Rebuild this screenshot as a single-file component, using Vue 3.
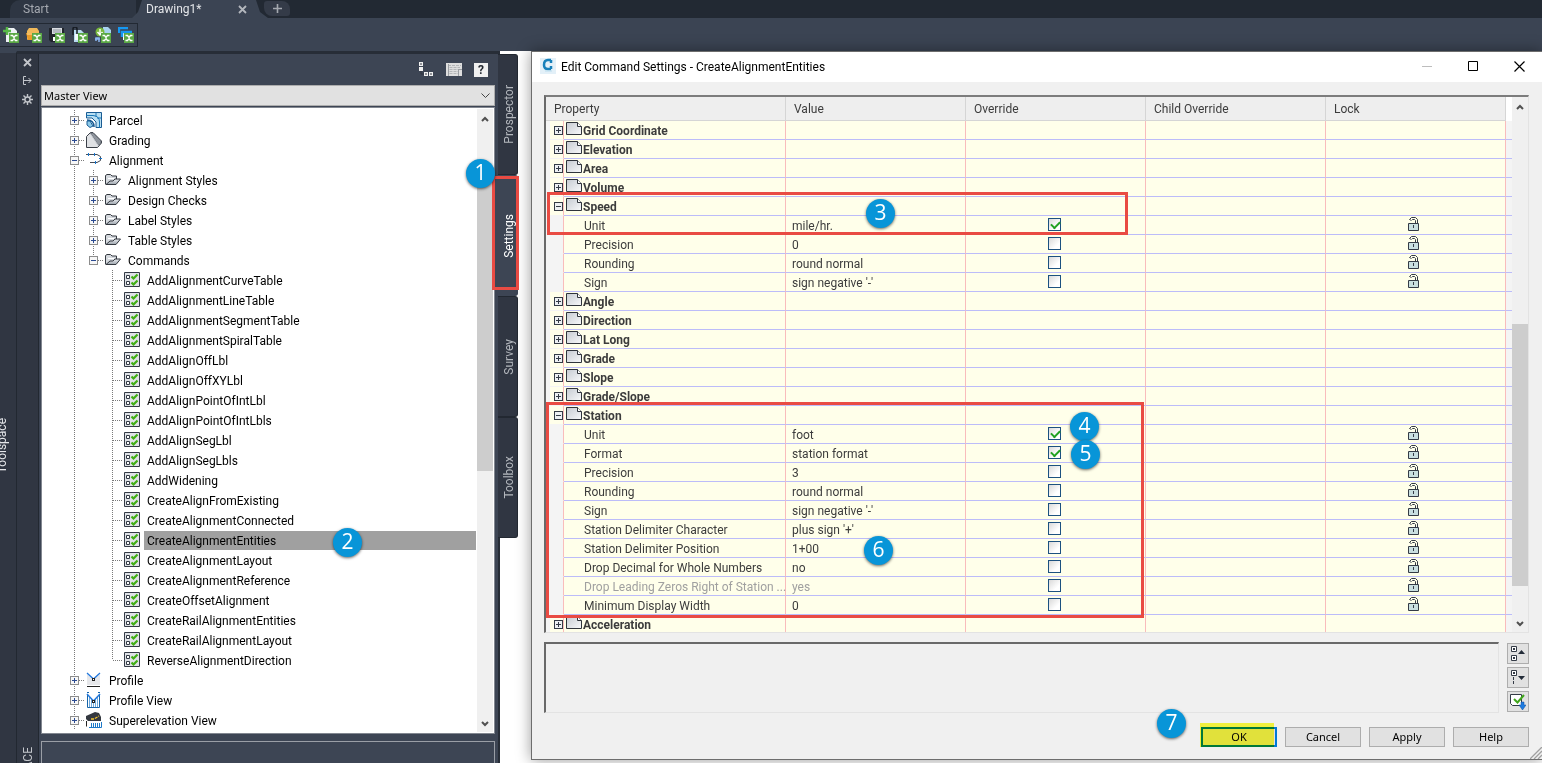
<template>
  <div class="app">
    <!-- Shared icon shapes -->
    <svg class="sprite" aria-hidden="true">
      <defs>
        <linearGradient id="paper" x1="0" y1="0" x2="1" y2="1">
          <stop offset="0" stop-color="#c6cbd2" />
          <stop offset="1" stop-color="#f8f9fa" />
        </linearGradient>
        <linearGradient id="steel" x1="0" y1="0" x2="0" y2="1">
          <stop offset="0" stop-color="#eceef1" />
          <stop offset="1" stop-color="#9aa2ab" />
        </linearGradient>
      </defs>
      <symbol id="badge-x" viewBox="0 0 10 10">
        <rect width="10" height="10" fill="#5aa845" />
        <path d="M1.500 2.500H3.500L5 4.500L6.500 2.500H8.500M1.500 7.500H3.500L5 5.500L6.500 7.500H8.500" fill="none" stroke="#fff" stroke-width="1.300" />
      </symbol>
      <symbol id="tool-new" viewBox="0 0 16 16">
        <path d="M3 1H11L14 4V15H3Z" fill="#eef2f5" />
        <path d="M0 4H8M4 0V8" stroke="#57b947" stroke-width="2.500" />
        <use href="#badge-x" x="6" y="6" width="10" height="10" />
      </symbol>
      <symbol id="tool-open" viewBox="0 0 16 16">
        <path d="M1 13V4L3 1H11L13 4V6" fill="#f0b95a" />
        <path d="M0 6H13L15 8L13 13H2Z" fill="#e99a27" />
        <path d="M1 7H13" stroke="#ffe0a0" />
        <use href="#badge-x" x="6" y="6" width="10" height="10" />
      </symbol>
      <symbol id="tool-save" viewBox="0 0 16 16">
        <path d="M0 1H15V15H2L0 13Z" fill="#20242b" />
        <path d="M3 1H13V7H3Z" fill="#d9dde2" />
        <path d="M4 3H12M4 5H12" stroke="#9299a2" />
        <path d="M4 10H6V14H4Z" fill="#fff" />
        <use href="#badge-x" x="6" y="6" width="10" height="10" />
      </symbol>
      <symbol id="tool-attach" viewBox="0 0 16 16">
        <path d="M2 3H9L13 7V15H2Z" fill="#b9dcf0" />
        <path d="M1 8V2Q1 0 3 0Q5 0 5 2V9" fill="none" stroke="#161b22" stroke-width="1.500" />
        <path d="M3 7H6V13H3Z" fill="#f3fafe" />
        <use href="#badge-x" x="6" y="6" width="10" height="10" />
      </symbol>
      <symbol id="tool-import" viewBox="0 0 16 16">
        <path d="M8 0H13L16 3V8H8Z" fill="#a9d2f0" />
        <circle cx="5" cy="5" r="4.500" fill="#79b93c" />
        <path d="M5 2V8M2.500 5L5 8L7.500 5" fill="none" stroke="#fff" stroke-width="1.400" />
        <path d="M0 12H5M1 14V11H4V15" fill="none" stroke="#8ab4ee" stroke-width="1.500" />
        <use href="#badge-x" x="6" y="6" width="10" height="10" />
      </symbol>
      <symbol id="tool-windows" viewBox="0 0 16 16">
        <path d="M1 6V1H10" fill="none" stroke="#1598f2" stroke-width="2.400" />
        <path d="M5 6H14V13H5Z" fill="#fff" />
        <path d="M4 10V5H14" fill="none" stroke="#1598f2" stroke-width="2.400" />
        <use href="#badge-x" x="6" y="6" width="10" height="10" />
      </symbol>

      <symbol id="parcel" viewBox="0 0 16 16">
        <path d="M.500 .500H15.500V15.500H10V10L6 6H.500Z" fill="#b9dff2" stroke="#1a5c93" />
        <path d="M.500 3.500H7Q13.500 4 13.500 10V15.500" fill="none" stroke="#1a78b8" />
        <path d="M1 8Q8 8 8 15" fill="none" stroke="#1a5c93" stroke-width="1.500" />
        <path d="M1 9H4L7 14L4 15.500L1 13Z" fill="#8ecbea" stroke="#1a5c93" />
        <path d="M10 1V5M15 6H11" stroke="#1a78b8" />
      </symbol>
      <symbol id="grading" viewBox="0 0 16 16">
        <path d="M.500 4.500L4.500 .500H7L15.500 9V11L11.500 15.500H.500Z" fill="#dfe1e4" stroke="#3a3f47" />
        <path d="M4.500 1L7 1L15 9V11L12.500 13.500Z" fill="#8f959d" stroke="#565c65" stroke-width=".700" />
        <path d="M4.500 2L12.500 14" stroke="#c6cad0" />
      </symbol>
      <symbol id="alignment" viewBox="0 0 16 16">
        <path d="M0 2.500H11M4 10.500H11M11 2.500L14.500 4.500V8.500L11 10.500" fill="none" stroke="#454c56" />
        <path d="M2.500 1V4M8.500 1V4M13 6.500H16M9.500 9V12" stroke="#1677d2" />
      </symbol>
      <symbol id="folder" viewBox="0 0 16 16">
        <path d="M.500 12.500V3.500L2 2.500H5.500L7 4H11.500V7" fill="#d5d9de" stroke="#343940" />
        <path d="M1 12.500L5 9H8L10 7H15.500L11 12.500Z" fill="url(#steel)" stroke="#343940" />
        <path d="M3 6.500H9" stroke="#fff" />
      </symbol>
      <symbol id="command" viewBox="0 0 16 16">
        <path d="M.500 .500H15.500V14.500H.500Z" fill="#dfe2e6" stroke="#343b46" />
        <path d="M2.500 3.500H5.500V6.500H2.500ZM2.500 9.500H5.500V12.500H2.500Z" fill="#fff" stroke="#343b46" />
        <path d="M7.500 4.500L9.500 6.500L13.500 2.500M7.500 10.500L9.500 12.500L13.500 8.500" fill="none" stroke="#3fae14" stroke-width="2.200" />
      </symbol>
      <symbol id="profile" viewBox="0 0 16 16">
        <path d="M1 2L7.500 8L14 2V13H1Z" fill="#e6e7ea" />
        <path d="M1 1L7.500 7L14 1" fill="none" stroke="#2378dc" stroke-width="1.300" />
        <rect x="6.500" y="6.500" width="2" height="2" fill="#fff" stroke="#222" />
        <path d="M1 14.500H14" stroke="#222" />
      </symbol>
      <symbol id="profile-view" viewBox="0 0 16 16">
        <path d="M1.500 3V15.500H13.500V3M1 .500H3M12 .500H14" fill="none" stroke="#1765a9" />
        <path d="M3.500 4V15M5.500 6V15M7.500 10V15M9.500 6V15M11.500 4V15" stroke="#6ea9dc" />
        <path d="M1 2L7.500 9L14 2" fill="none" stroke="#2378dc" stroke-width="1.500" />
        <rect x="6.500" y="8.500" width="2" height="2" fill="#fff" stroke="#222" />
      </symbol>
      <symbol id="superelevation" viewBox="0 0 16 16">
        <path d="M0 7V4L9 0L13 1L15 5V9L2 9Z" fill="#343840" />
        <path d="M5 7H8L13 4" fill="none" stroke="#f4c530" stroke-width="1.300" stroke-dasharray="3 1" />
        <path d="M.500 9V14.500" stroke="#222" />
        <path d="M3 15.500H15.500V10M5.500 11V15M7.500 11V15M9.500 11V15M11.500 11V15M13.500 11V15" fill="none" stroke="#1d79c9" />
      </symbol>

      <symbol id="page" viewBox="0 0 16 14">
        <path d="M.500 .500H11.500L15.500 4.500V12.500H.500Z" fill="url(#paper)" stroke="#2f343b" />
        <path d="M11.500 .500V4.500H15.500" fill="#fff" stroke="#2f343b" />
      </symbol>
      <symbol id="unlocked" viewBox="0 0 11 14">
        <path d="M3 3H2L1.500 2.500L3.500 .500H7.500L9.500 2.500V6" fill="none" stroke="#343b46" />
        <path d="M3.500 3.500L4.500 2.500H6.500L7.500 3.500V6" fill="none" stroke="#343b46" />
        <path d="M.500 6.500H10.500V13.500H.500Z" fill="#c9dfe0" stroke="#343b46" />
        <path d="M5.500 8V11" stroke="#343b46" />
      </symbol>
      <symbol id="chevron-up" viewBox="0 0 8 6">
        <path d="M1 5L4 2L7 5" fill="none" stroke="#505050" stroke-width="2" />
      </symbol>
      <symbol id="chevron-down" viewBox="0 0 8 6">
        <path d="M1 1L4 4L7 1" fill="none" stroke="#505050" stroke-width="2" />
      </symbol>
    </svg>

    <header class="top">
      <nav class="tabs">
        <button class="tab">Start</button>
        <button class="tab tab-active">
          Drawing1*
          <svg width="9" height="9" viewBox="0 0 9 9"><path d="M1 1L8 8M8 1L1 8" stroke="#b3b7bd" stroke-width="1.800" /></svg>
        </button>
        <button class="tab-add" aria-label="New tab">
          <svg width="9" height="9" viewBox="0 0 9 9"><path d="M0 4.500H9M4.500 0V9" stroke="#a4a8af" stroke-width="1.600" /></svg>
        </button>
      </nav>
      <div class="toolbar">
        <button v-for="tool in tools" :key="tool.icon" :aria-label="tool.label">
          <svg width="16" height="16"><use :href="'#' + tool.icon" /></svg>
        </button>
      </div>
    </header>

    <main class="workspace">
      <div class="dock"><span>Toolspace</span></div>

      <section class="palette">
        <div class="palette-rail">
          <svg width="9" height="9" viewBox="0 0 9 9"><path d="M1 1L8 8M8 1L1 8" stroke="#c3c6cb" stroke-width="1.800" /></svg>
          <svg width="9" height="9" viewBox="0 0 9 9"><path d="M3 .500H.500V8.500H3M1 4.500H8M5.500 2L8 4.500L5.500 7" fill="none" stroke="#c3c6cb" /></svg>
          <svg width="11" height="11" viewBox="0 0 11 11">
            <circle cx="5.500" cy="5.500" r="2.500" fill="none" stroke="#c3c6cb" stroke-width="1.400" />
            <path d="M5.500 0V3M5.500 8V11M0 5.500H3M8 5.500H11M1.500 1.500L3.500 3.500M7.500 7.500L9.500 9.500M9.500 1.500L7.500 3.500M3.500 7.500L1.500 9.500" stroke="#c3c6cb" stroke-width="1.400" />
          </svg>
          <span class="palette-name">TOOLSPACE</span>
        </div>

        <div class="palette-body">
          <div class="palette-tools">
            <button aria-label="Toggle item tree">
              <svg width="15" height="15" viewBox="0 0 15 15">
                <path d="M0 0H4V4H0ZM0 5H4V9H0ZM5 10H9V14H5ZM10 10H14V14H10Z" fill="#f0f0f0" />
                <path d="M1 2H3M2 9V12H5M6 12H8M11 12H13" fill="none" stroke="#30353e" />
              </svg>
            </button>
            <button aria-label="Panorama">
              <svg width="16" height="14" viewBox="0 0 16 14">
                <path d="M0 0H16V13H0Z" fill="#dedede" />
                <path d="M2 2.500H15M3.500 4.500H14M3.500 6.500H12M3.500 8.500H12M3.500 10.500H12" stroke="#b4b6b8" stroke-dasharray="3 1" />
                <path d="M2.500 1V13M12.500 6V13M12.500 6.500H16" fill="none" stroke="#9b9ea2" />
              </svg>
            </button>
            <button class="help" aria-label="Help">?</button>
          </div>

          <div class="view-select">
            <select aria-label="View">
              <option>Master View</option>
            </select>
            <svg width="9" height="6" viewBox="0 0 9 6"><path d="M.500 .500L4.500 4.500L8.500 .500" fill="none" stroke="#444" /></svg>
          </div>

          <div class="tree-box">
            <ul class="tree">
              <li
                v-for="node in treeNodes"
                :key="node.label"
                :class="{ selected: node.label === selectedNode }"
              >
                <svg
                  v-for="(guide, i) in node.guides"
                  :key="i"
                  width="19"
                  height="20"
                  shape-rendering="crispEdges"
                >
                  <path v-if="guide !== 'none'" :d="guidePaths[guide]" stroke="#7a7a7a" stroke-dasharray="1 1" fill="none" />
                  <g v-if="node.toggle && i === node.guides.length - 1">
                    <rect x="5.500" y="6.500" width="8" height="8" fill="#f7f7f7" stroke="#8c8c8c" />
                    <path :d="node.toggle === 'plus' ? 'M7 10.500H12M9.500 8V13' : 'M7 10.500H12'" stroke="#2b4a91" />
                  </g>
                </svg>
                <svg class="node-icon" width="16" height="16"><use :href="'#' + node.icon" /></svg>
                <span>{{ node.label }}</span>
              </li>
            </ul>
            <div class="scrollbar tree-scroll">
              <svg width="8" height="6"><use href="#chevron-up" /></svg>
              <div class="thumb"></div>
              <svg width="8" height="6"><use href="#chevron-down" /></svg>
            </div>
          </div>
          <div class="preview"></div>
        </div>
        <b class="step step-2">2</b>
      </section>

      <nav class="side-tabs">
        <button
          v-for="tab in sideTabs"
          :key="tab"
          :class="{ current: tab === 'Settings' }"
        ><span>{{ tab }}</span></button>
        <div class="mark mark-settings"></div>
        <b class="step step-1">1</b>
      </nav>

      <section class="dialog">
        <div class="dialog-title">
          <svg width="16" height="16" viewBox="0 0 16 16">
            <rect width="16" height="16" fill="#e3f0f8" />
            <path d="M11 2H8Q4 2 4 7Q4 11 8 11H11M11 2V5M11 8V11" fill="none" stroke="#1780ba" stroke-width="2.500" />
            <path d="M5 13H12" stroke="#b9dced" />
          </svg>
          <h1>Edit Command Settings - CreateAlignmentEntities</h1>
          <button aria-label="Minimize"><svg width="11" height="11" viewBox="0 0 11 11"><path d="M0 5.500H10" stroke="#bdbdbd" /></svg></button>
          <button aria-label="Maximize"><svg width="11" height="11" viewBox="0 0 11 11"><path d="M.500 .500H9.500V9.500H.500Z" fill="none" stroke="#000" /></svg></button>
          <button aria-label="Close"><svg width="11" height="11" viewBox="0 0 11 11"><path d="M.500 .500L10.500 10.500M10.500 .500L.500 10.500" stroke="#000" stroke-width="1.200" /></svg></button>
        </div>

        <div class="grid-box">
          <table>
            <colgroup>
              <col class="col-toggle" />
              <col class="col-property" />
              <col /><col /><col /><col />
              <col class="col-end" />
            </colgroup>
            <thead>
              <tr>
                <th colspan="2">Property</th>
                <th>Value</th>
                <th>Override</th>
                <th>Child Override</th>
                <th>Lock</th>
                <th class="end"></th>
              </tr>
            </thead>
            <tbody>
              <tr v-for="(row, i) in rows" :key="i" :class="{ muted: row.muted }">
                <td class="toggle">
                  <button v-if="row.group" :aria-label="'Toggle ' + row.name">
                    <svg width="9" height="9" viewBox="0 0 9 9" shape-rendering="crispEdges">
                      <rect x=".500" y=".500" width="8" height="8" fill="#edf0f3" stroke="#343b46" />
                      <path :d="row.open ? 'M2 4.500H7' : 'M2 4.500H7M4.500 2V7'" stroke="#343b46" />
                    </svg>
                  </button>
                </td>
                <td v-if="row.group" class="group">
                  <div><svg width="16" height="14"><use href="#page" /></svg><span>{{ row.name }}</span></div>
                </td>
                <td v-else class="property">{{ row.name }}</td>
                <td>{{ row.value }}</td>
                <td class="override">
                  <input v-if="!row.group" v-model="row.override" type="checkbox" :aria-label="row.name + ' override'" />
                </td>
                <td></td>
                <td class="lock">
                  <svg v-if="!row.group" width="11" height="14"><use href="#unlocked" /></svg>
                </td>
                <td class="end"></td>
              </tr>
            </tbody>
          </table>
          <div class="scrollbar grid-scroll">
            <svg width="8" height="6"><use href="#chevron-up" /></svg>
            <div class="thumb"></div>
            <svg width="8" height="6"><use href="#chevron-down" /></svg>
          </div>
        </div>

        <div class="details">
          <div class="description"></div>
          <div class="detail-buttons">
            <button aria-label="Collapse all">
              <svg width="16" height="16" viewBox="0 0 16 16">
                <path d="M1.500 .500H6.500V5.500H1.500ZM1.500 9.500H6.500V14.500H1.500Z" fill="#fff" stroke="#343b46" />
                <path d="M3 2H5V4H3ZM3 11H5V13H3Z" fill="#343b46" />
                <path d="M8 8L11.500 4L15 8Z" fill="#222b38" />
              </svg>
            </button>
            <button aria-label="Expand all">
              <svg width="16" height="16" viewBox="0 0 16 16">
                <path d="M1.500 .500H6.500V5.500H1.500Z" fill="#fff" stroke="#343b46" />
                <path d="M3 2H5V4H3Z" fill="#343b46" />
                <path d="M3.500 7V15" stroke="#343b46" stroke-dasharray="3 1" />
                <path d="M8 6L11.500 10L15 6Z" fill="#222b38" />
              </svg>
            </button>
            <button aria-label="Override all dependencies">
              <svg width="16" height="16" viewBox="0 0 16 16">
                <path d="M.500 .500H11.500V11.500H2.500L.500 9.500Z" fill="#fff" stroke="#343b46" />
                <path d="M4 5L7.500 8.500L14 1" fill="none" stroke="#3fa51b" stroke-width="2" />
                <path d="M11 8H14V11H16L12.500 16L9 11H11Z" fill="#1e7be0" stroke="#0d4f9d" stroke-width=".500" />
              </svg>
            </button>
          </div>
        </div>

        <div class="actions">
          <button class="ok">OK</button>
          <button>Cancel</button>
          <button>Apply</button>
          <button>Help</button>
          <div class="highlight"></div>
        </div>
        <svg class="grip" width="12" height="12" viewBox="0 0 12 12"><path d="M0 12L12 0M4 12L12 4M8 12L12 8" stroke="#a0a0a0" stroke-width="1.300" /></svg>

        <div class="mark mark-speed"></div>
        <div class="mark mark-station"></div>
        <b class="step step-3">3</b>
        <b class="step step-4">4</b>
        <b class="step step-5">5</b>
        <b class="step step-6">6</b>
        <b class="step step-7">7</b>
      </section>
    </main>
  </div>
</template>

<script setup>
import { ref } from 'vue';

const tools = [
  { icon: 'tool-new', label: 'New' },
  { icon: 'tool-open', label: 'Open' },
  { icon: 'tool-save', label: 'Save' },
  { icon: 'tool-attach', label: 'Attach' },
  { icon: 'tool-import', label: 'Import' },
  { icon: 'tool-windows', label: 'Windows' }
];

const sideTabs = ['Prospector', 'Settings', 'Survey', 'Toolbox'];

// Dotted connector lines of the tree, one cell per depth level
const guidePaths = {
  line: 'M9.500 0V20',
  branch: 'M9.500 0V20M9.500 10.500H19',
  corner: 'M9.500 0V10M9.500 10.500H19'
};

const selectedNode = 'CreateAlignmentEntities';

const top = (label, icon, toggle = 'plus') => ({ label, icon, toggle, guides: ['branch'] });
const folder = (label) => ({ label, icon: 'folder', toggle: 'plus', guides: ['line', 'branch'] });

const commands = [
  'AddAlignmentCurveTable',
  'AddAlignmentLineTable',
  'AddAlignmentSegmentTable',
  'AddAlignmentSpiralTable',
  'AddAlignOffLbl',
  'AddAlignOffXYLbl',
  'AddAlignPointOfIntLbl',
  'AddAlignPointOfIntLbls',
  'AddAlignSegLbl',
  'AddAlignSegLbls',
  'AddWidening',
  'CreateAlignFromExisting',
  'CreateAlignmentConnected',
  'CreateAlignmentEntities',
  'CreateAlignmentLayout',
  'CreateAlignmentReference',
  'CreateOffsetAlignment',
  'CreateRailAlignmentEntities',
  'CreateRailAlignmentLayout',
  'ReverseAlignmentDirection'
];

const treeNodes = [
  top('Parcel', 'parcel'),
  top('Grading', 'grading'),
  top('Alignment', 'alignment', 'minus'),
  folder('Alignment Styles'),
  folder('Design Checks'),
  folder('Label Styles'),
  folder('Table Styles'),
  { label: 'Commands', icon: 'folder', toggle: 'minus', guides: ['line', 'corner'] },
  ...commands.map((label, i) => ({
    label,
    icon: 'command',
    guides: ['line', 'none', i === commands.length - 1 ? 'corner' : 'branch']
  })),
  top('Profile', 'profile'),
  top('Profile View', 'profile-view'),
  top('Superelevation View', 'superelevation')
];

const group = (name, open = false) => ({ name, open, group: true });
const setting = (name, value, override = false, muted = false) => ({ name, value, override, muted });

const rows = ref([
  group('Grid Coordinate'),
  group('Elevation'),
  group('Area'),
  group('Volume'),
  group('Speed', true),
  setting('Unit', 'mile/hr.', true),
  setting('Precision', '0'),
  setting('Rounding', 'round normal'),
  setting('Sign', "sign negative '-'"),
  group('Angle'),
  group('Direction'),
  group('Lat Long'),
  group('Grade'),
  group('Slope'),
  group('Grade/Slope'),
  group('Station', true),
  setting('Unit', 'foot', true),
  setting('Format', 'station format', true),
  setting('Precision', '3'),
  setting('Rounding', 'round normal'),
  setting('Sign', "sign negative '-'"),
  setting('Station Delimiter Character', "plus sign '+'"),
  setting('Station Delimiter Position', '1+00'),
  setting('Drop Decimal for Whole Numbers', 'no'),
  setting('Drop Leading Zeros Right of Station ...', 'yes', false, true),
  setting('Minimum Display Width', '0'),
  group('Acceleration')
]);
</script>

<style>
body {
  margin: 0;
  background: #fff;
}
</style>

<style scoped>
.app {
  font-family: Roboto, "Noto Sans", sans-serif;
  font-size: 12px;
  color: #000;
  overflow: hidden;
}

.app * {
  box-sizing: border-box;
}

.sprite {
  position: absolute;
  width: 0;
  height: 0;
}

svg {
  display: block;
  flex: none;
}

button {
  font: inherit;
  padding: 0;
  border: 0;
  background: none;
  color: inherit;
}

/* Top bar */
.top {
  height: 51px;
  background: #3b4453;
}

.tabs {
  display: flex;
  height: 18px;
  background: #222933;
}

.tab {
  width: 126px;
  margin-left: 10px;
  padding-left: 13px;
  text-align: left;
  line-height: 18px;
  color: #a5a9b0;
  background: #2e3643;
  border-radius: 10px 0 0 0;
}

.tab-active {
  display: flex;
  align-items: center;
  justify-content: space-between;
  width: 136px;
  margin-left: -4px;
  padding: 0 21px 0 14px;
  color: #e4e6e9;
  background: #3b4453;
  clip-path: polygon(10px 0, 124px 0, 128px 12px, 136px 18px, 0 18px, 6px 12px);
}

.tab-add {
  display: flex;
  align-items: center;
  justify-content: center;
  width: 26px;
  height: 15px;
  margin-top: 1px;
  margin-left: -4px;
  background: #343b48;
  border-radius: 3px 8px 3px 8px;
}

.toolbar {
  display: flex;
  gap: 7px;
  width: 138px;
  height: 24px;
  margin-top: 5px;
  padding: 3px;
  border: 1px solid #222933;
  border-left: 0;
}

/* Toolspace palette */
.workspace {
  display: flex;
  align-items: stretch;
}

.dock {
  flex: none;
  width: 17px;
  padding-top: 365px;
  background: #303642;
  border-top: 2px solid #3b4453;
  border-right: 1px solid #222831;
  color: #e4e6e9;
  overflow: hidden;
}

.dock span {
  display: block;
  width: 17px;
  margin-left: -6px;
  line-height: 17px;
  writing-mode: vertical-rl;
  transform: rotate(180deg);
}

.palette {
  position: relative;
  display: flex;
  flex: none;
  width: 481px;
  background: #3d4554;
  border-top: 3px solid #272d37;
}

/* The rail takes its height from the palette body, the name runs off its end */
.palette-rail {
  contain: size;
  display: flex;
  flex-direction: column;
  align-items: center;
  gap: 9px;
  width: 22px;
  padding-top: 4px;
  background: #303642;
  border-right: 1px solid #222831;
  overflow: hidden;
}

.palette-name {
  flex: none;
  margin-top: 633px;
  line-height: 16px;
  color: #c3c6cb;
  writing-mode: vertical-rl;
  transform: rotate(180deg);
}

.palette-body {
  display: flex;
  flex: 1;
  flex-direction: column;
  padding: 0 3px 0 2px;
}

.palette-tools {
  display: flex;
  justify-content: flex-end;
  align-items: center;
  gap: 12px;
  height: 31px;
  padding-right: 7px;
}

.help {
  width: 14px;
  height: 14px;
  background: #f0f0f0;
  color: #1f242c;
  font-weight: 700;
  line-height: 14px;
}

.view-select {
  position: relative;
  height: 21px;
}

.view-select select {
  display: block;
  width: 100%;
  height: 21px;
  padding: 0 2px;
  appearance: none;
  font-family: "Noto Sans", "Open Sans", sans-serif;
  font-size: 11px;
  color: #000;
  background: #e1e1e1;
  border: 1px solid #adadad;
  border-radius: 0;
}

.view-select svg {
  position: absolute;
  top: 8px;
  right: 5px;
  pointer-events: none;
}

.tree-box {
  display: flex;
  margin-top: 1px;
  background: #fff;
  border: 1px solid #828790;
}

.tree {
  flex: 1;
  margin: 0;
  padding: 2px 1px 3px 23px;
  list-style: none;
}

.tree li {
  display: flex;
  align-items: center;
  height: 20px;
}

.node-icon {
  margin: 0 4px 0 2px;
}

.tree span {
  flex: 1;
  padding: 2px 0 0 3px;
  line-height: 17px;
  white-space: nowrap;
}

.selected span {
  background: #a0a0a0;
}

.scrollbar {
  display: flex;
  flex-direction: column;
  align-items: center;
  justify-content: space-between;
  flex: none;
  width: 16px;
  padding: 7px 0 5px;
  background: #f0f0f0;
}

.thumb {
  width: 16px;
  background: #cdcdcd;
}

.tree-scroll {
  margin: 1px 1px 1px 0;
}

.tree-scroll .thumb {
  height: 290px;
  margin-bottom: 192px;
}

.preview {
  height: 22px;
  margin-top: 7px;
  border: 1px solid #9a9ea6;
  border-bottom: 0;
}

.side-tabs {
  position: relative;
  flex: none;
  width: 33px;
  padding-top: 3px;
  background: linear-gradient(to right, #272d37 2px, #fff 2px);
}

.side-tabs button {
  display: flex;
  align-items: center;
  justify-content: center;
  width: 20px;
  height: 121px;
  padding-left: 2px;
  background: #303642;
  color: #b3b7bd;
  border: 1px solid #222831;
  border-left: 0;
  border-radius: 0 3px 3px 0;
}

.side-tabs button span {
  line-height: 18px;
  writing-mode: vertical-rl;
  transform: rotate(180deg);
}

.side-tabs .current {
  color: #fff;
  background: #3d4554;
  border-color: #3d4554;
}

/* Settings dialog */
.dialog {
  position: relative;
  flex: 1;
  min-width: 0;
  margin-bottom: 3px;
  background: #f0f0f0;
  border: 1px solid #6d6d6d;
  border-right: 0;
  box-shadow: 0 0 14px rgba(0, 0, 0, 0.4);
}

.dialog-title {
  display: flex;
  align-items: center;
  height: 30px;
  padding: 0 17px 2px 8px;
  background: #fff;
}

.dialog-title h1 {
  flex: 1;
  margin: 0 0 0 5px;
  padding-top: 2px;
  font-size: 12px;
  font-weight: 400;
}

.dialog-title button {
  margin-left: 35px;
}

.grid-box {
  display: flex;
  height: 538px;
  margin: 13px 13px 0 12px;
  border: 2px solid #696969;
  border-top-color: #7c7c7c;
  border-right: 1px solid #e3e3e3;
  border-bottom: 1px solid #e3e3e3;
  overflow: hidden;
  color: #3c3c3c;
}

table {
  flex: 1;
  width: 0;
  height: 0;
  table-layout: fixed;
  border-collapse: separate;
  border-spacing: 0;
}

.col-toggle {
  width: 18px;
}

.col-property {
  width: 222px;
}

.col-end {
  width: 6px;
}

th {
  height: 24px;
  padding: 0 8px;
  text-align: left;
  font-weight: 400;
  background: #eee;
  border-right: 1px solid #d5d5d5;
  border-bottom: 1px solid #d5d5d5;
}

th.end {
  padding: 0;
  background: #fff;
  border: 0;
}

td {
  height: 19px;
  padding: 2px 0 0 6px;
  line-height: 16px;
  vertical-align: top;
  white-space: nowrap;
  background: #ffffea;
  border-right: 1px solid #f9bcbc;
  border-bottom: 1px solid #bcbcf9;
}

td.toggle {
  padding: 0 0 0 4px;
  background: #f4f4f4;
  border-bottom-color: #f4f4f4;
}

td.toggle button {
  display: block;
  width: 13px;
  height: 18px;
  padding: 5px 4px 4px;
  background: #ffffea;
}

td.group {
  padding: 1px 0 0 2px;
  font-weight: 700;
}

td.group div {
  display: flex;
  gap: 1px;
  height: 17px;
}

td.group span {
  line-height: 18px;
}

td.property {
  padding-left: 20px;
}

td.override {
  padding: 2px 2px 0 0;
}

td.lock {
  padding: 1px 4px 0 0;
}

td.lock svg {
  margin: 0 auto;
}

td.end {
  padding: 0;
  background: #f4f4f4;
  border-right: 0;
}

.muted td {
  color: #a0a0a0;
}

input {
  display: block;
  appearance: none;
  width: 13px;
  height: 13px;
  margin: 0 auto;
  background: linear-gradient(135deg, #d9d9d9, #fff 70%);
  border: 1px solid #1c5180;
}

input:checked::before {
  content: "";
  display: block;
  width: 7px;
  height: 4px;
  margin: 2px 0 0 2px;
  border: solid #21a121;
  border-width: 0 0 2px 2px;
  transform: rotate(-45deg);
}

.grid-scroll {
  background: #f0f0f0;
}

.grid-scroll .thumb {
  height: 262px;
  margin-top: 178px;
}

.details {
  display: flex;
  gap: 8px;
  margin: 9px 13px 0 12px;
}

.description {
  flex: 1;
  height: 71px;
  border: 2px solid #696969;
  border-right: 1px solid #e3e3e3;
  border-bottom: 1px solid #e3e3e3;
}

.detail-buttons {
  display: flex;
  flex-direction: column;
  gap: 3px;
  padding-top: 1px;
}

.detail-buttons button {
  display: flex;
  align-items: center;
  justify-content: center;
  width: 22px;
  height: 21px;
  background: #e1e1e1;
  border: 1px solid #adadad;
}

.actions {
  position: relative;
  display: flex;
  justify-content: flex-end;
  gap: 8px;
  margin: 14px 13px 12px 0;
}

.actions button {
  width: 76px;
  height: 20px;
  font-family: "Noto Sans", "Open Sans", sans-serif;
  font-size: 11px;
  line-height: 18px;
  background: #e1e1e1;
  border: 1px solid #adadad;
}

.actions .ok {
  line-height: 16px;
  border: 2px solid #0078d7;
}

.highlight {
  position: absolute;
  top: -4px;
  right: 255px;
  width: 74px;
  height: 24px;
  background: #ffff43;
  mix-blend-mode: multiply;
}

.grip {
  position: absolute;
  right: 0;
  bottom: 0;
}

/* Tutorial marks laid over the windows */
.mark {
  position: absolute;
  z-index: 2;
  border: 3px solid #e94b43;
}

.mark-settings {
  top: 125px;
  left: -6px;
  width: 27px;
  height: 114px;
}

.mark-speed {
  top: 140px;
  left: 15px;
  width: 581px;
  height: 43px;
}

.mark-station {
  top: 350px;
  left: 14px;
  width: 598px;
  height: 216px;
}

.step {
  position: absolute;
  z-index: 3;
  width: 29px;
  height: 29px;
  border-radius: 50%;
  background: #0895d8;
  color: #fff;
  font-family: "Open Sans", "Noto Sans", sans-serif;
  font-size: 21px;
  font-weight: 400;
  line-height: 27px;
  text-align: center;
  box-shadow: 0 1px 3px rgba(0, 0, 0, 0.6);
}

.step-1 {
  top: 108px;
  left: -32px;
}

.step-2 {
  top: 474px;
  left: 316px;
}

.step-3 {
  top: 147px;
  left: 334px;
}

.step-4 {
  top: 360px;
  left: 538px;
}

.step-5 {
  top: 388px;
  left: 539px;
}

.step-6 {
  top: 484px;
  left: 332px;
}

.step-7 {
  top: 657px;
  left: 625px;
}
</style>
